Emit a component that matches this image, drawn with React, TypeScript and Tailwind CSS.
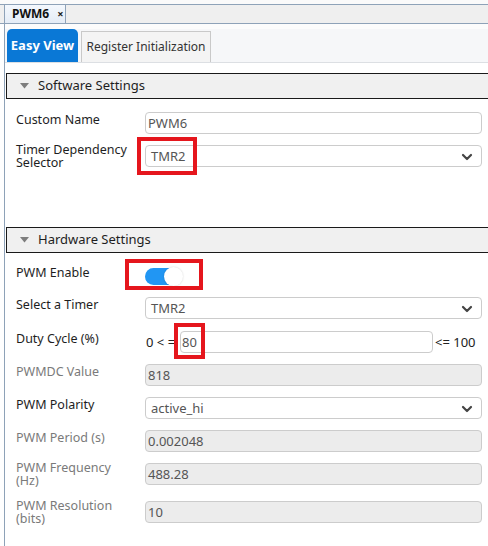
import React from "react";

const font = { fontFamily: '"Noto Sans", "Open Sans", sans-serif' };

function Chevron() {
  return (
    <svg width="12" height="8" viewBox="0 0 12 8" className="absolute right-[8px] top-[7px]">
      <path d="M2 2 L6 6 L10 2" stroke="#444" strokeWidth="2.2" fill="none" strokeLinecap="round" strokeLinejoin="round" />
    </svg>
  );
}

function Field({ value, disabled }: { value: string; disabled?: boolean }) {
  return (
    <div
      className={
        "h-[22px] w-[337px] rounded-[4px] border border-[#cccccc] pl-[2px] text-[13px] leading-[20px] text-[#555] " +
        (disabled ? "bg-[#ececec]" : "bg-white")
      }
    >
      {value}
    </div>
  );
}

function Select({ value }: { value: string }) {
  return (
    <div className="relative h-[22px] w-[337px] rounded-[4px] border border-[#cccccc] bg-white pl-[5px] text-[13px] leading-[20px] text-[#555]">
      {value}
      <Chevron />
    </div>
  );
}

function Row({
  label,
  gray,
  multi,
  mt,
  children,
}: {
  label: React.ReactNode;
  gray?: boolean;
  multi?: boolean;
  mt: string;
  children: React.ReactNode;
}) {
  return (
    <div className={"flex items-start " + mt}>
      <div
        className={
          "w-[140px] shrink-0 pl-[11px] text-[12.5px] " +
          (multi ? "-mt-[2px] h-[24px] leading-[13px] " : "leading-[16px] ") +
          (gray ? "text-[#7a7a7a]" : "text-[#1e1e1e]")
        }
      >
        {label}
      </div>
      {children}
    </div>
  );
}

function SectionHeader({ title, mt }: { title: string; mt: string }) {
  return (
    <div className={"ml-[1px] flex h-[26px] items-center border border-r-0 border-[#1a1a1a] bg-[#f0f0f0] " + mt}>
      <svg width="9" height="6" viewBox="0 0 9 6" className="ml-[13px] mr-[9px]">
        <path d="M0 0 H9 L4.5 5.5 Z" fill="#7d7d7d" />
      </svg>
      <span className="text-[13px] text-[#1e1e1e]">{title}</span>
    </div>
  );
}

export default function App() {
  return (
    <div className="relative h-[546px] w-[488px] overflow-hidden bg-white" style={font}>
      {/* top document tab bar */}
      <div className="h-[4px] bg-[#fafafa]" />
      <div className="flex h-[20px] border-y border-[#8ea2b8] bg-[#efefef]">
        <div className="ml-[4px] flex h-full w-[62px] items-center border-x border-[#8ea2b8] bg-gradient-to-b from-[#f4f8fd] to-[#e4ecf6] pl-[7px]">
          <span className="text-[12px] font-bold text-[#111]">PWM6</span>
          <span className="ml-[8px] text-[11px] font-bold text-[#222]">×</span>
        </div>
      </div>
      {/* content with left border */}
      <div className="ml-[4px] h-[522px] border-l border-[#8ea2b8]">
        {/* sub tabs */}
        <div className="h-[5px] bg-[#fcfcfc]" />
        <div className="flex h-[34px] items-end border-b border-[#dcdfe3] bg-[#f6f7f9]">
          <div className="ml-[2px] flex h-[33px] w-[71px] items-center justify-center whitespace-nowrap rounded-t-[5px] bg-[#0a78d6] text-[13px] font-bold text-white">
            Easy View
          </div>
          <div className="ml-[3px] flex h-[31px] w-[130px] items-center justify-center whitespace-nowrap border border-b-0 border-[#c9c9c9] bg-[#f4f4f4] text-[12px] text-[#333]">
            Register Initialization
          </div>
        </div>

        <SectionHeader title="Software Settings" mt="mt-[10px]" />

        <Row label="Custom Name" mt="mt-[13px]">
          <Field value="PWM6" />
        </Row>
        <Row label={<>Timer Dependency<br />Selector</>} multi mt="mt-[11px]">
          <Select value="TMR2" />
        </Row>

        <SectionHeader title="Hardware Settings" mt="mt-[60px]" />

        <Row label="PWM Enable" mt="mt-[12px]">
          <div className="relative mt-[2px] h-[19px] w-[42px]">
            <div className="absolute left-0 top-[1px] h-[17px] w-[32px] rounded-full bg-[#2196f3]" />
            <div className="absolute left-[19px] top-0 h-[19px] w-[19px] rounded-full bg-white shadow-[0_0_2px_rgba(0,0,0,0.18)]" />
          </div>
        </Row>
        <Row label="Select a Timer" mt="mt-[11px]">
          <Select value="TMR2" />
        </Row>
        <Row label="Duty Cycle (%)" mt="mt-[12px]">
          <div className="flex items-center">
            <span className="w-[35px] whitespace-nowrap pl-[1px] text-[13px] leading-[22px] text-[#222]">0 &lt; =</span>
            <div className="h-[22px] w-[253px] rounded-[4px] border border-[#cccccc] bg-white pl-[1px] text-[13px] leading-[20px] text-[#555]">
              80
            </div>
            <span className="ml-[2px] whitespace-nowrap text-[13px] leading-[22px] text-[#222]">&lt;= 100</span>
          </div>
        </Row>
        <Row label="PWMDC Value" gray mt="mt-[11px]">
          <Field value="818" disabled />
        </Row>
        <Row label="PWM Polarity" mt="mt-[11px]">
          <Select value="active_hi" />
        </Row>
        <Row label="PWM Period (s)" gray mt="mt-[11px]">
          <Field value="0.002048" disabled />
        </Row>
        <Row label={<>PWM Frequency<br />(Hz)</>} gray multi mt="mt-[11px]">
          <Field value="488.28" disabled />
        </Row>
        <Row label={<>PWM Resolution<br />(bits)</>} gray multi mt="mt-[16px]">
          <Field value="10" disabled />
        </Row>
      </div>

      {/* red annotation boxes */}
      <div className="pointer-events-none absolute left-[137px] top-[137px] h-[38px] w-[60px] border-[4px] border-[#e5161d]" />
      <div className="pointer-events-none absolute left-[125px] top-[259px] h-[31px] w-[78px] border-[4px] border-[#e5161d]" />
      <div className="pointer-events-none absolute left-[174px] top-[323px] h-[36px] w-[31px] border-[4px] border-[#e5161d]" />
    </div>
  );
}
